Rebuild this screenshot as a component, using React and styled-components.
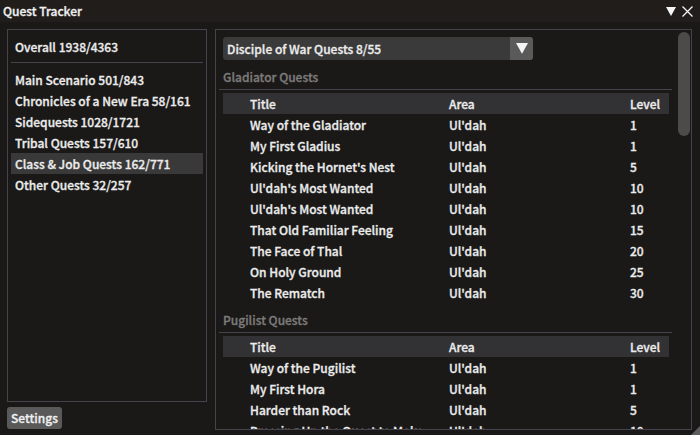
import React from "react";
import styled, { createGlobalStyle } from "styled-components";

const Global = createGlobalStyle`
  html, body { margin: 0; padding: 0; background: #1c1a19; }
  body {
    width: 700px; height: 435px; overflow: hidden;
    font-family: "Noto Sans CJK JP", "Noto Sans", sans-serif;
    font-weight: 500; font-size: 12px; color: #ececec;
    -webkit-text-stroke: 0.3px currentColor;
  }
`;

const Window = styled.div`
  position: relative;
  width: 700px; height: 435px;
  display: flex; flex-direction: column;
  background: #1b1918;
  overflow: hidden;
`;

const TitleBar = styled.div`
  height: 22px; flex: none;
  display: flex; align-items: center; justify-content: space-between;
  padding: 0 7px 0 3px;
  background: #201d1b;
`;

const Title = styled.span`
  line-height: 22px; color: #f0f0f0;
`;

const TitleIcons = styled.div`
  display: flex; align-items: center; gap: 6px;
`;

const Body = styled.div`
  flex: 1; min-height: 0;
  display: flex; gap: 8px;
  padding: 7px 8px 6px 7px;
`;

const LeftCol = styled.div`
  width: 200px; flex: none;
  display: flex; flex-direction: column; gap: 5px;
`;

const Panel = styled.div`
  border: 1px solid #47434c;
  background: #1a1918;
  box-sizing: border-box;
`;

const CategoryPanel = styled(Panel)`
  height: 373px;
  padding: 6px 3px 0;
`;

const Item = styled.div`
  height: 21px; line-height: 21px;
  padding-left: 4px;
  background: ${(p) => (p.$active ? "#3a3939" : "transparent")};
  white-space: nowrap;
`;

const Sep = styled.div`
  height: 1px; background: #47434c;
  margin: 5px 0 6px;
`;

const Button = styled.div`
  width: 55px; height: 22px; line-height: 22px;
  text-align: center;
  background: #595959; border-radius: 3px;
  color: #f0f0f0;
`;

const RightPanel = styled(Panel)`
  flex: 1; min-width: 0;
  height: 401px;
  display: flex;
  overflow: hidden;
`;

const Content = styled.div`
  flex: 1; min-width: 0;
  padding: 0 0 0 3px;
`;

const ScrollTrack = styled.div`
  width: 19px; flex: none;
  padding-top: 2px; padding-left: 6px;
  box-sizing: border-box;
`;

const Thumb = styled.div`
  width: 12px; height: 104px;
  background: #4b4b4b; border-radius: 6px;
`;

const Dropdown = styled.div`
  margin: 7px 0 0 4px;
  width: 310px; height: 23px;
  display: flex;
  background: #3a3a3a; border-radius: 3px;
  overflow: hidden;
`;

const DropText = styled.div`
  flex: 1; padding-left: 4px; line-height: 23px;
`;

const DropArrow = styled.div`
  width: 23px; background: #5a5a5a;
  display: flex; align-items: center; justify-content: center;
`;

const SectionTitle = styled.div`
  padding: 7px 0 2px 4px;
  height: 20px; line-height: 20px;
  color: #7d7b7a;
  border-bottom: 1px solid #47434c;
`;

const Table = styled.div`
  margin: 3px 3px 0 4px;
`;

const Row = styled.div`
  height: 21px; line-height: 21px;
  display: grid;
  grid-template-columns: 199px 181px 1fr;
  padding-left: 27px;
  background: ${(p) => (p.$head ? "#323234" : "transparent")};
  white-space: nowrap;
`;

const Grip = styled.div`
  position: absolute; right: 0; bottom: 0;
  width: 0; height: 0;
  border-left: 9px solid transparent;
  border-bottom: 9px solid #5e5e5e;
`;

const Tri = ({ size = 10, color = "#f5f5f5" }) => (
  <svg width={size} height={size * 0.9} viewBox="0 0 10 9">
    <polygon points="0,0 10,0 5,9" fill={color} />
  </svg>
);

const categories = [
  "Main Scenario 501/843",
  "Chronicles of a New Era 58/161",
  "Sidequests 1028/1721",
  "Tribal Quests 157/610",
  "Class & Job Quests 162/771",
  "Other Quests 32/257",
];

const gladiator = [
  ["Way of the Gladiator", "Ul'dah", "1"],
  ["My First Gladius", "Ul'dah", "1"],
  ["Kicking the Hornet's Nest", "Ul'dah", "5"],
  ["Ul'dah's Most Wanted", "Ul'dah", "10"],
  ["Ul'dah's Most Wanted", "Ul'dah", "10"],
  ["That Old Familiar Feeling", "Ul'dah", "15"],
  ["The Face of Thal", "Ul'dah", "20"],
  ["On Holy Ground", "Ul'dah", "25"],
  ["The Rematch", "Ul'dah", "30"],
];

const pugilist = [
  ["Way of the Pugilist", "Ul'dah", "1"],
  ["My First Hora", "Ul'dah", "1"],
  ["Harder than Rock", "Ul'dah", "5"],
  ["Pressing Up the Quest to Make", "Ul'dah", "10"],
];

const Section = ({ name, rows }) => (
  <>
    <SectionTitle>{name}</SectionTitle>
    <Table>
      <Row $head>
        <span>Title</span>
        <span>Area</span>
        <span>Level</span>
      </Row>
      {rows.map((r, i) => (
        <Row key={i}>
          <span>{r[0]}</span>
          <span>{r[1]}</span>
          <span>{r[2]}</span>
        </Row>
      ))}
    </Table>
  </>
);

export default function App() {
  return (
    <Window>
      <Global />
      <TitleBar>
        <Title>Quest Tracker</Title>
        <TitleIcons>
          <Tri size={10} />
          <svg width="11" height="11" viewBox="0 0 11 11">
            <path d="M0.5 0.5 L10.5 10.5 M10.5 0.5 L0.5 10.5" stroke="#f5f5f5" strokeWidth="1.3" />
          </svg>
        </TitleIcons>
      </TitleBar>
      <Body>
        <LeftCol>
          <CategoryPanel>
            <Item>Overall 1938/4363</Item>
            <Sep />
            {categories.map((c) => (
              <Item key={c} $active={c.startsWith("Class")}>{c}</Item>
            ))}
          </CategoryPanel>
          <Button>Settings</Button>
        </LeftCol>
        <RightPanel>
          <Content>
            <Dropdown>
              <DropText>Disciple of War Quests 8/55</DropText>
              <DropArrow>
                <Tri size={12} />
              </DropArrow>
            </Dropdown>
            <Section name="Gladiator Quests" rows={gladiator} />
            <Section name="Pugilist Quests" rows={pugilist} />
          </Content>
          <ScrollTrack>
            <Thumb />
          </ScrollTrack>
        </RightPanel>
      </Body>
      <Grip />
    </Window>
  );
}
